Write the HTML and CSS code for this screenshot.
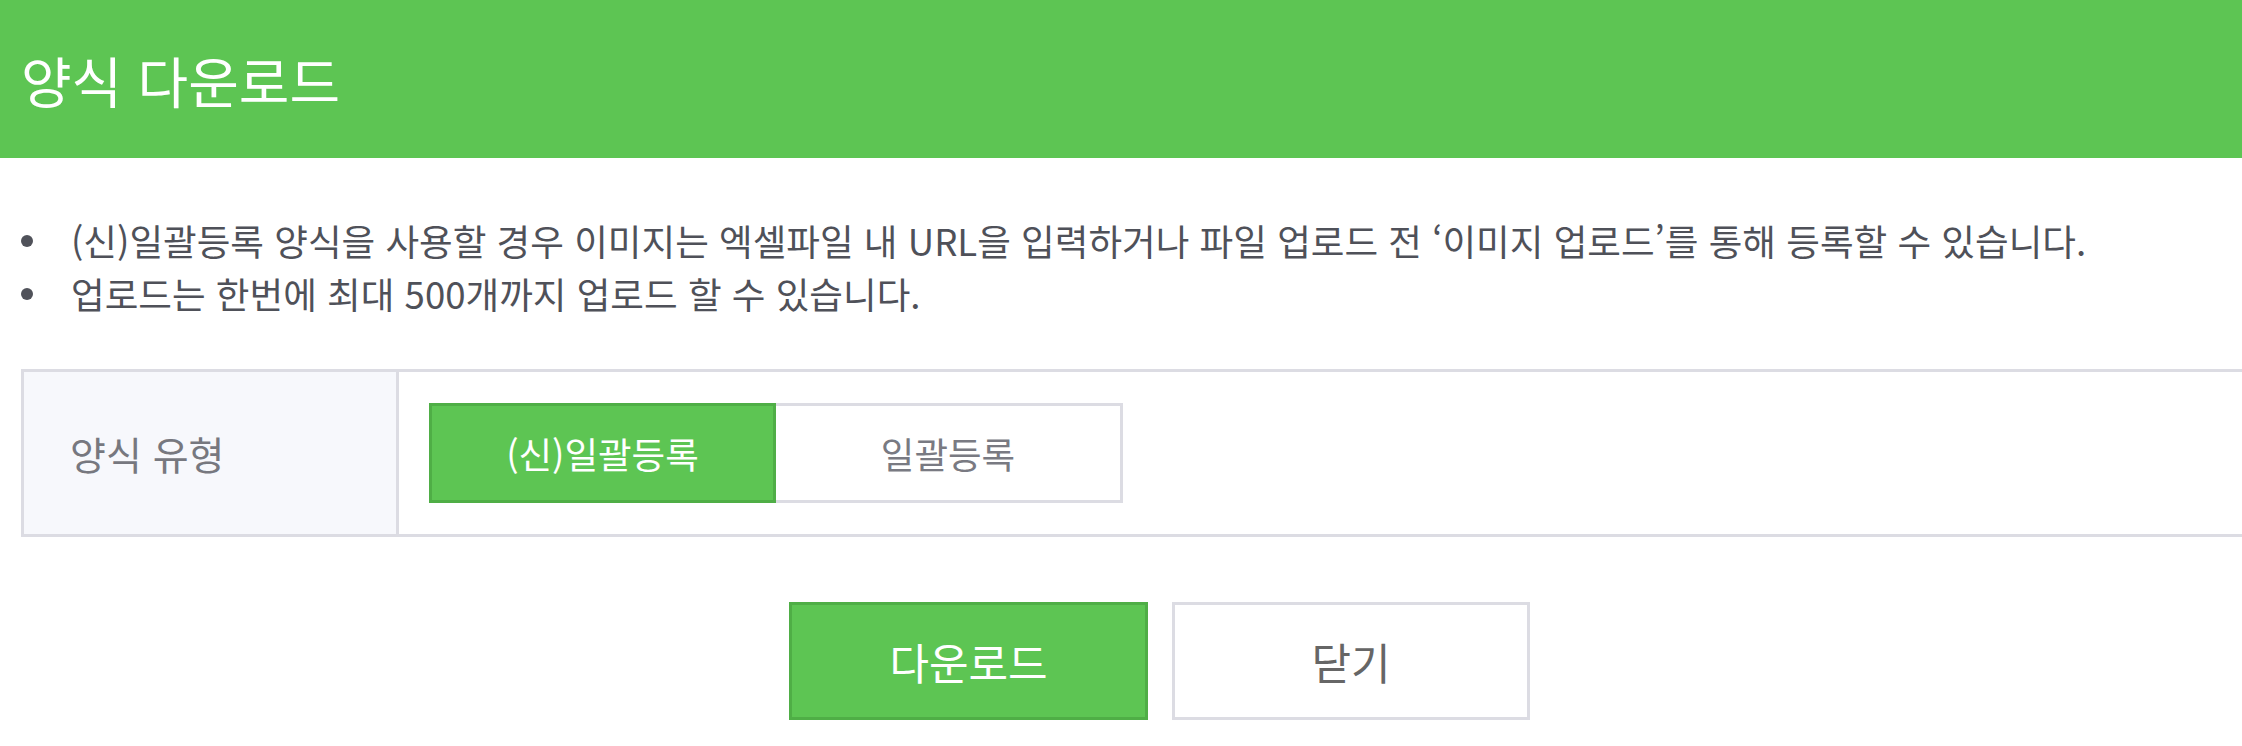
FILE: index.html
```html
<!DOCTYPE html>
<html lang="ko">
  <head>
    <meta charset="UTF-8" />
    <meta name="viewport" content="width=device-width, initial-scale=1.0" />
    <title>양식 다운로드</title>
    <link rel="stylesheet" href="styles.css">
  </head>
  <body>
    <div class="popup">
      <h1 class="popup-title">양식 다운로드</h1>

      <div class="popup-body">
        <ul class="notice">
          <li>(신)일괄등록 양식을 사용할 경우 이미지는 엑셀파일 내 URL을 입력하거나 파일 업로드 전 ‘이미지 업로드’를 통해 등록할 수 있습니다.</li>
          <li>업로드는 한번에 최대 500개까지 업로드 할 수 있습니다.</li>
        </ul>

        <div class="form-table">
          <div class="form-label">양식 유형</div>
          <div class="form-field">
            <div class="toggle">
              <button type="button" class="toggle-btn active">(신)일괄등록</button>
              <button type="button" class="toggle-btn">일괄등록</button>
            </div>
          </div>
        </div>

        <div class="btn-container">
          <button type="button" class="btn btn-primary">다운로드</button>
          <button type="button" class="btn">닫기</button>
        </div>
      </div>
    </div>
  </body>
</html>
```

FILE: styles.css
```css
body {
  font-family: "Noto Sans CJK KR", "Noto Sans", sans-serif;
  background-color: #ffffff;
  margin: 0;
  padding: 0;
  overflow: hidden;
}

.popup-title {
  margin: 0;
  height: 158px;
  display: flex;
  align-items: center;
  padding-left: 21px;
  background-color: #5dc553;
  color: #ffffff;
  font-size: 55px;
  font-weight: 400;
}

.popup-body {
  width: 2277px;
  padding: 56px 21px 0;
}

.notice {
  list-style: none;
  margin: 0;
  padding: 0;
  color: #4f5159;
  font-size: 36.6px;
  line-height: 53px;
  white-space: nowrap;
}

.notice li {
  display: flex;
  align-items: center;
}

.notice li::before {
  content: "";
  width: 12px;
  height: 12px;
  border-radius: 50%;
  background-color: #50525a;
  margin-right: 38px;
  flex: none;
}

.form-table {
  display: flex;
  margin-top: 49px;
  border: 3px solid #dcdce3;
}

.form-label {
  width: 326px;
  padding-left: 46px;
  display: flex;
  align-items: center;
  background-color: #f7f8fc;
  border-right: 3px solid #dcdce3;
  color: #77787f;
  font-size: 39px;
}

.form-field {
  padding: 31px 30px;
}

.toggle {
  display: flex;
}

.toggle-btn {
  width: 347px;
  height: 100px;
  font-family: inherit;
  font-size: 36.5px;
  color: #797a82;
  background-color: #ffffff;
  border: 3px solid #dcdce3;
  border-left: none;
  padding: 0;
}

.toggle-btn.active {
  color: #ffffff;
  background-color: #5dc553;
  border: 3px solid #4fae46;
}

.btn-container {
  display: flex;
  justify-content: center;
  gap: 24px;
  margin-top: 65px;
}

.btn {
  width: 358px;
  height: 118px;
  font-family: inherit;
  font-size: 43px;
  color: #666666;
  background-color: #ffffff;
  border: 3px solid #dcdce3;
  padding: 0;
}

.btn-primary {
  width: 359px;
  color: #ffffff;
  background-color: #5dc553;
  border-color: #4fae46;
}
```
